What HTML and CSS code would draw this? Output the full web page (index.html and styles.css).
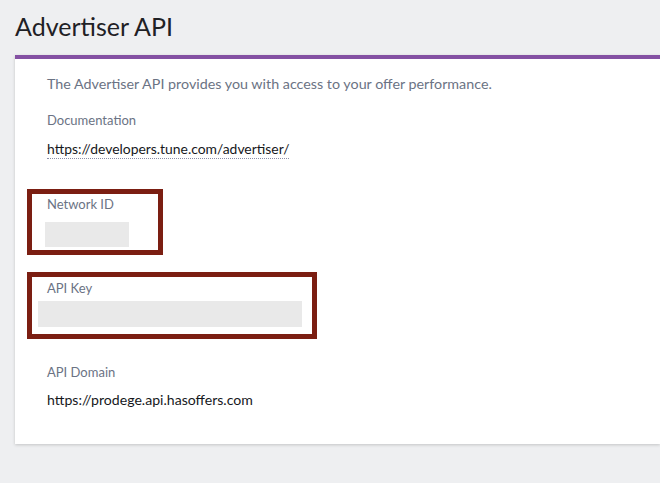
FILE: index.html
```html
<!DOCTYPE html>
<html>
<head>
<meta charset="utf-8">
<link rel="stylesheet" href="styles.css">
</head>
<body>
<h1 class="title">Advertiser API</h1>
<div class="card">
  <p class="desc">The Advertiser API provides you with access to your offer performance.</p>
  <div class="label label-doc">Documentation</div>
  <div class="value-row"><span class="link">https://developers.tune.com/advertiser/</span></div>
  <div class="field field-network">
    <div class="field-label">Network ID</div>
    <div class="mask mask-network"></div>
  </div>
  <div class="field field-key">
    <div class="field-label">API Key</div>
    <div class="mask mask-key"></div>
  </div>
  <div class="label label-domain">API Domain</div>
  <div class="value">https://prodege.api.hasoffers.com</div>
</div>
</body>
</html>
```
FILE: styles.css
```css
html, body {
  margin: 0;
  padding: 0;
}
body {
  background: #eeeff1;
  font-family: "Lato", "Open Sans", sans-serif;
  width: 660px;
  height: 483px;
  overflow: hidden;
}
.title {
  margin: 0;
  padding: 11px 0 0 15px;
  height: 55px;
  box-sizing: border-box;
  font-size: 25px;
  line-height: 30px;
  font-weight: 400;
  color: #1f2125;
}
.card {
  margin-left: 15px;
  background: #fff;
  border-top: 4px solid #8451a3;
  box-shadow: 0 1px 3px rgba(0,0,0,0.18);
  padding: 15px 0 35px 0;
  display: flex;
  flex-direction: column;
  align-items: flex-start;
}
.desc {
  margin: 0 0 0 32px;
  font-size: 14.3px;
  line-height: 20px;
  color: #6b7384;
}
.label {
  margin-left: 32px;
  font-size: 13px;
  line-height: 18px;
  color: #6b7384;
}
.label-doc {
  margin-top: 17px;
}
.value-row {
  margin: 10px 0 0 32px;
  line-height: 18px;
}
.link {
  display: inline-block;
  font-size: 13.9px;
  line-height: 18px;
  color: #16181c;
  border-bottom: 1px dotted #8b8fa8;
}
.field {
  margin-left: 12px;
  border: 5px solid #7b1e12;
  display: flex;
  flex-direction: column;
  align-items: flex-start;
}
.field-network {
  margin-top: 30px;
  width: 126px;
  height: 55px;
  padding-top: 1px;
}
.field-key {
  margin-top: 17px;
  width: 280px;
  height: 55px;
  padding-top: 2px;
}
.field-label {
  margin-left: 15px;
  font-size: 13px;
  line-height: 18px;
  color: #6b7384;
}
.mask {
  background: #e9e9e9;
}
.mask-network {
  margin: 9px 0 0 13px;
  width: 84px;
  height: 25px;
}
.mask-key {
  margin: 4px 0 0 6px;
  width: 264px;
  height: 26px;
}
.label-domain {
  margin-top: 24px;
}
.value {
  margin: 10px 0 0 32px;
  font-size: 14.1px;
  line-height: 18px;
  color: #16181c;
}
```
